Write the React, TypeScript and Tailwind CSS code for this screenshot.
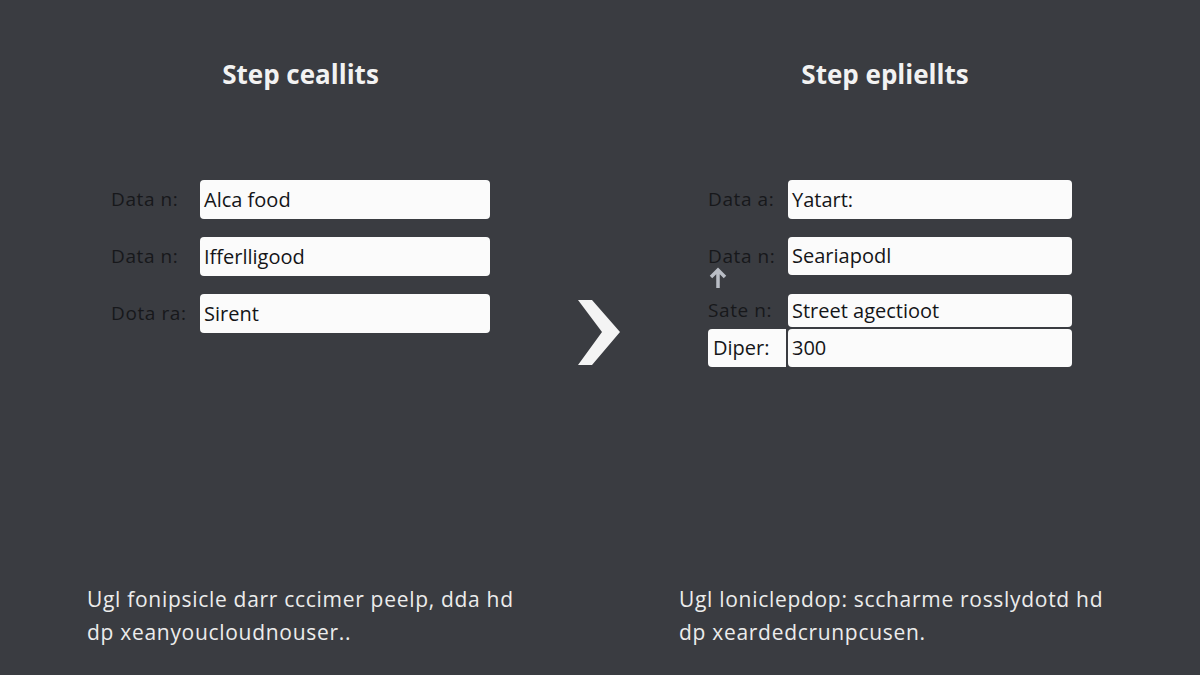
const leftRows = [
  { label: 'Data n:', value: 'Alca food' },
  { label: 'Data n:', value: 'Ifferlligood' },
  { label: 'Dota ra:', value: 'Sirent' },
]

function Chevron() {
  return (
    <svg width="42" height="65" viewBox="0 0 42 65">
      <polygon points="0,0 14,0 42,32 14,65 0,65 24,32" fill="#f4f4f4" />
    </svg>
  )
}

function Field({ value, className = 'h-[39px]' }: { value: string; className?: string }) {
  return (
    <div className={`flex flex-1 items-center rounded-[4px] bg-[#fbfbfb] px-[4px] text-[20px] text-[#141518] ${className}`}>
      {value}
    </div>
  )
}

export default function App() {
  return (
    <div
      className="flex h-[675px] w-[1200px] flex-col bg-[#3a3c41]"
      style={{ fontFamily: '"Open Sans", "Noto Sans", sans-serif' }}
    >
      <div className="flex flex-1">
        {/* left step */}
        <div className="flex w-[490px] flex-col pl-[111px] pt-[56px]">
          <h2 className="text-center text-[26px] leading-[36px] font-bold text-[#f2f2f2]">Step ceallits</h2>
          <div className="mt-[88px] flex flex-col gap-[18px]">
            {leftRows.map((r, i) => (
              <div key={i} className="flex items-center">
                <span className="w-[89px] text-[19px] tracking-[0.6px] text-[#17181b]">{r.label}</span>
                <Field value={r.value} />
              </div>
            ))}
          </div>
        </div>

        <div className="flex w-[218px] justify-center pt-[300px]">
          <Chevron />
        </div>

        {/* right step */}
        <div className="flex w-[364px] flex-col pt-[56px]">
          <h2 className="pr-[10px] text-center text-[26px] leading-[36px] font-bold text-[#f2f2f2]">Step epliellts</h2>
          <div className="relative mt-[88px] flex flex-col">
            <div className="flex items-center">
              <span className="w-[80px] text-[19px] tracking-[0.6px] text-[#17181b]">Data a:</span>
              <Field value="Yatart:" />
            </div>
            <div className="mt-[18px] flex items-center">
              <span className="w-[80px] text-[19px] tracking-[0.6px] text-[#17181b]">Data n:</span>
              <Field value="Seariapodl" className="h-[38px]" />
            </div>
            <div className="mt-[19px] flex items-center">
              <span className="w-[80px] text-[19px] tracking-[0.6px] text-[#17181b]">Sate n:</span>
              <Field value="Street agectioot" className="h-[33px]" />
            </div>
            <div className="mt-[2px] flex items-stretch">
              <div className="mr-[2px] flex h-[38px] w-[78px] items-center rounded-l-[4px] bg-[#fbfbfb] px-[5px] text-[20px] text-[#141518]">
                Diper:
              </div>
              <Field value="300" className="h-[38px]" />
            </div>
            <svg className="absolute left-0 top-[86px]" width="20" height="24" viewBox="0 0 20 24">
              <path d="M10 22 V4 M3 11 L10 4 L17 11" stroke="#b9bdc5" strokeWidth="3.5" fill="none" />
            </svg>
          </div>
        </div>
      </div>

      <div className="flex pb-[26px] pl-[87px] text-[21px] leading-[33px] tracking-[0.7px] text-[#ececec]">
        <p className="w-[592px]">
          Ugl fonipsicle darr cccimer peelp, dda hd
          <br />
          dp xeanyoucloudnouser..
        </p>
        <p>
          Ugl loniclepdop: sccharme rosslydotd hd
          <br />
          dp xeardedcrunpcusen.
        </p>
      </div>
    </div>
  )
}
